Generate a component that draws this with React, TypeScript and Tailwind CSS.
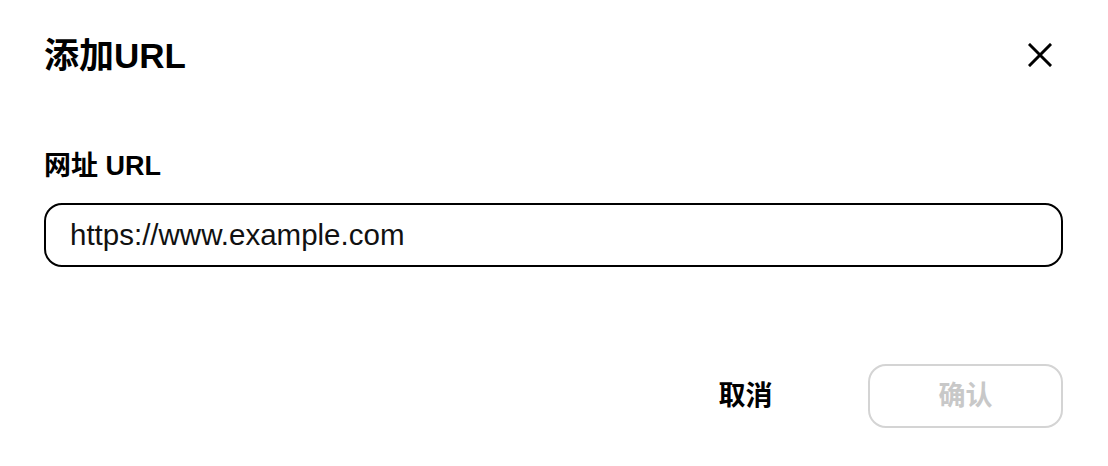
import { useState } from 'react';

const font = { fontFamily: '"Liberation Sans", "Noto Sans CJK SC", sans-serif' };

function CloseIcon() {
  return (
    <svg width="24" height="24" viewBox="0 0 24 24" fill="none" stroke="black" strokeWidth="3" strokeLinecap="square">
      <path d="M2 2 L22 22 M22 2 L2 22" />
    </svg>
  );
}

export default function App() {
  const [url, setUrl] = useState('https://www.example.com');

  return (
    <div className="w-[1108px] h-[466px] bg-white text-black px-[44px] pt-[30px] flex flex-col" style={font}>
      <div className="h-[50px] flex items-center justify-between">
        <h1 className="text-[35px] leading-none font-semibold">添加URL</h1>
        <button className="w-[44px] h-[44px] flex items-center justify-center mr-[2px]">
          <CloseIcon />
        </button>
      </div>

      <label className="mt-[68px] text-[27px] leading-[36px] font-bold">网址 URL</label>

      <input
        value={url}
        onChange={(e) => setUrl(e.target.value)}
        className="mt-[19px] h-[64px] w-[1019px] rounded-[18px] border-2 border-black px-[24px] text-[29.5px] text-[#111] outline-none"
      />

      <div className="mt-[97px] flex justify-end gap-[25px] mr-[1px]">
        <button className="w-[195px] h-[64px] text-[27px] font-bold flex items-center justify-center">取消</button>
        <button className="w-[195px] h-[64px] rounded-[18px] border-2 border-[#d4d4d4] text-[27px] font-bold text-[#c8c8c8] flex items-center justify-center">
          确认
        </button>
      </div>
    </div>
  );
}
